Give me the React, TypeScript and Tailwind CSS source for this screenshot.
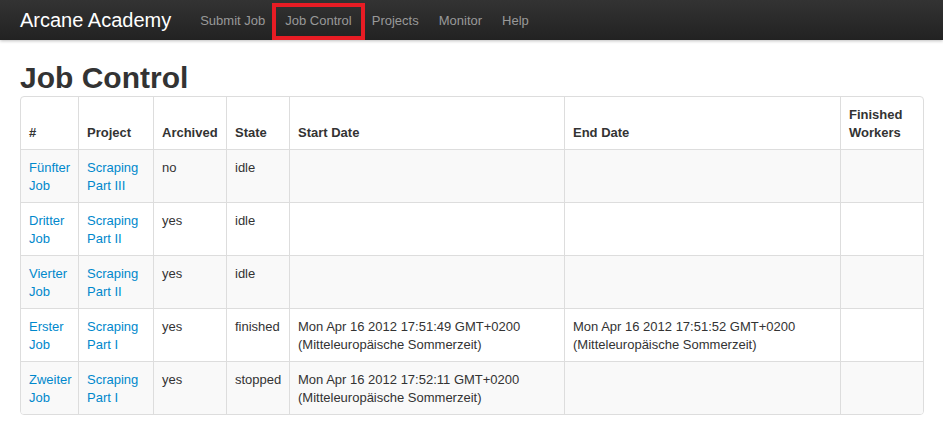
import React from 'react';

interface JobRow {
  name: [string, string];
  project: [string, string];
  archived: string;
  state: string;
  start: string[];
  end: string[];
}

const jobs: JobRow[] = [
  { name: ['Fünfter', 'Job'], project: ['Scraping', 'Part III'], archived: 'no', state: 'idle', start: [], end: [] },
  { name: ['Dritter', 'Job'], project: ['Scraping', 'Part II'], archived: 'yes', state: 'idle', start: [], end: [] },
  { name: ['Vierter', 'Job'], project: ['Scraping', 'Part II'], archived: 'yes', state: 'idle', start: [], end: [] },
  {
    name: ['Erster', 'Job'],
    project: ['Scraping', 'Part I'],
    archived: 'yes',
    state: 'finished',
    start: ['Mon Apr 16 2012 17:51:49 GMT+0200', '(Mitteleuropäische Sommerzeit)'],
    end: ['Mon Apr 16 2012 17:51:52 GMT+0200', '(Mitteleuropäische Sommerzeit)'],
  },
  {
    name: ['Zweiter', 'Job'],
    project: ['Scraping', 'Part I'],
    archived: 'yes',
    state: 'stopped',
    start: ['Mon Apr 16 2012 17:52:11 GMT+0200', '(Mitteleuropäische Sommerzeit)'],
    end: [],
  },
];

const navItems = ['Submit Job', 'Job Control', 'Projects', 'Monitor', 'Help'];

function Lines({ lines }: { lines: string[] }) {
  return (
    <>
      {lines.map((l, i) => (
        <div key={i}>{l}</div>
      ))}
    </>
  );
}

export default function App() {
  const th = 'border-l border-[#dddddd] px-2 pt-[9px] pb-[7px] text-left align-bottom font-bold';
  const td = 'border-l border-t border-[#dddddd] px-2 pt-[9px] pb-[7px] align-top';

  return (
    <div className="min-h-screen bg-white font-['Liberation_Sans',Arial,sans-serif] text-[13px] leading-[18px] text-[#333333]">
      <nav className="flex h-10 items-center bg-gradient-to-b from-[#333333] to-[#222222] shadow-[0_1px_3px_rgba(0,0,0,0.25)]">
        <a className="px-5 text-[20px] leading-[20px] text-white">Arcane Academy</a>
        <ul className="-ml-px flex h-10 items-stretch">
          {navItems.map(item => (
            <li key={item} className="relative flex items-center px-[10px] leading-[19px] text-[#999999]">
              {item}
              {item === 'Job Control' && (
                <span className="absolute -left-[3px] -right-[3px] top-[3px] bottom-0 border-[4px] border-[#e81c24]" />
              )}
            </li>
          ))}
        </ul>
      </nav>

      <main className="px-5">
        <h1 className="mt-5 text-[30px] font-bold leading-[36px] text-[#333333]">Job Control</h1>
        <div className="w-[904px] overflow-hidden rounded-[4px] border border-[#dddddd]">
          <table className="w-[902px] table-fixed border-separate border-spacing-0">
            <thead>
              <tr>
                <th className="w-[57px] px-2 pt-[9px] pb-[7px] text-left align-bottom font-bold">#</th>
                <th className={`w-[75px] ${th}`}>Project</th>
                <th className={`w-[73px] ${th}`}>Archived</th>
                <th className={`w-[63px] ${th}`}>State</th>
                <th className={`w-[275px] ${th}`}>Start Date</th>
                <th className={`w-[276px] ${th}`}>End Date</th>
                <th className={`w-[83px] ${th}`}>
                  Finished
                  <br />
                  Workers
                </th>
              </tr>
            </thead>
            <tbody>
              {jobs.map((job, i) => (
                <tr key={i} className={i % 2 === 0 ? 'bg-[#f9f9f9]' : 'bg-white'}>
                  <td className="border-t border-[#dddddd] px-2 pt-[9px] pb-[7px] align-top text-[#0088cc]">
                    <Lines lines={job.name} />
                  </td>
                  <td className={`${td} text-[#0088cc]`}>
                    <Lines lines={job.project} />
                  </td>
                  <td className={td}>{job.archived}</td>
                  <td className={td}>{job.state}</td>
                  <td className={`${td} h-[53px]`}>
                    <Lines lines={job.start} />
                  </td>
                  <td className={td}>
                    <Lines lines={job.end} />
                  </td>
                  <td className={td}></td>
                </tr>
              ))}
            </tbody>
          </table>
        </div>
      </main>
    </div>
  );
}
